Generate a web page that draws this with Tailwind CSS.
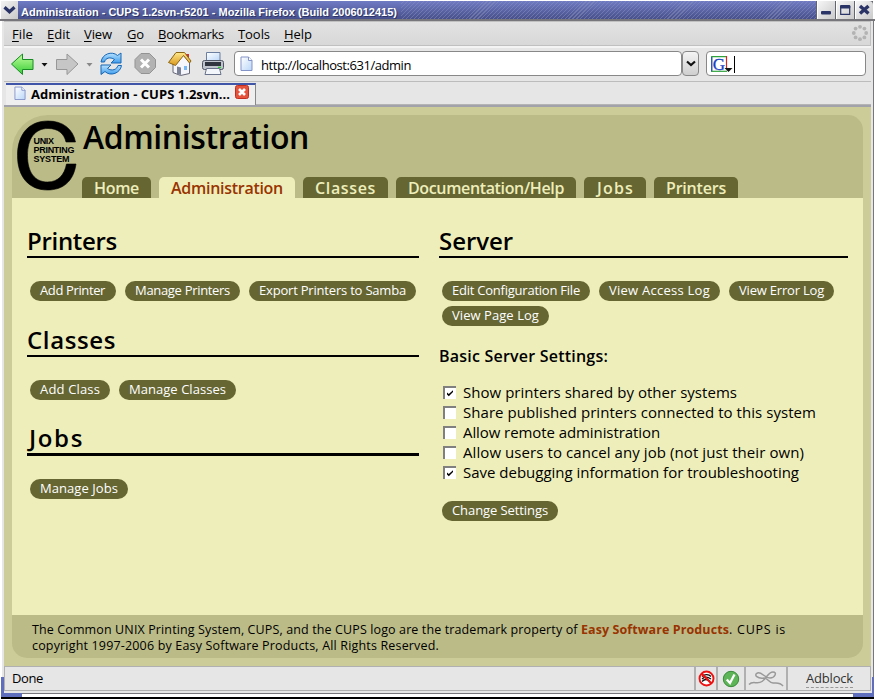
<!DOCTYPE html>
<html lang="en">
<head>
<meta charset="utf-8">
<title>Administration - CUPS 1.2svn-r5201</title>
<script src="https://cdn.jsdelivr.net/npm/@tailwindcss/browser@4"></script>
</head>
<body class="w-[875px] h-[699px] overflow-hidden bg-white font-['Open_Sans','Noto_Sans',sans-serif] text-black">
<div class="relative flex flex-col w-[875px] h-[699px] whitespace-nowrap">

  <!-- Title bar -->
  <header class="flex shrink-0 h-[21px] pt-px pl-px pr-[2px] border-b-2 border-[#77777b]">
    <div class="w-[17px] bg-linear-to-br from-[#f4f4f4] to-[#c8c8c8] flex items-center justify-center">
      <svg width="13" height="10" viewBox="0 0 13 10"><path d="M1.5 2.2 L6.5 6.8 L11.5 2.2" fill="none" stroke="#2b3466" stroke-width="3.2"/></svg>
    </div>
    <div class="flex-1 flex bg-linear-to-b from-[#6f7bc4] to-[#48508c]">
      <span data-w="376" class="pl-[3px] pt-[2px] text-[11px] leading-[18px] font-bold font-['Liberation_Sans',sans-serif] text-white [text-shadow:1px_1px_0_#2b3466]">Administration - CUPS 1.2svn-r5201 - Mozilla Firefox (Build 2006012415)</span>
      <div class="flex-1 ml-[4px] bg-[repeating-linear-gradient(135deg,transparent_0_2px,#8c93b880_2px_2.8px)]"></div>
    </div>
    <div class="flex gap-px pl-px bg-[#62656f]">
      <div class="w-[18px] bg-linear-to-br from-[#f6f6f6] to-[#cacaca] border-l border-white"><svg width="17" height="18"><rect x="3" y="10" width="10" height="3.5" rx="1" fill="#2b3466"/></svg></div>
      <div class="w-[18px] bg-linear-to-br from-[#f6f6f6] to-[#cacaca] border-l border-white"><svg width="17" height="18"><path d="M3.7 5.5h9v7.8h-9z" fill="none" stroke="#2b3466" stroke-width="1.2"/><rect x="3" y="4" width="10.3" height="3.4" rx="1" fill="#2b3466"/></svg></div>
      <div class="w-[18px] bg-linear-to-br from-[#f6f6f6] to-[#cacaca] border-l border-white rounded-tr-sm"><svg width="17" height="18"><path d="M4 5l8.5 7.5M12.500 5L4 12.500" fill="none" stroke="#2b3466" stroke-width="3.4"/></svg></div>
    </div>
  </header>

  <div class="flex flex-col h-[672px] shrink-0 ml-[2px] mr-px pl-[2px] pr-[2px] border-r border-[#77777b] bg-[#e6e6e6]">
    <!-- Menu bar -->
    <nav class="flex shrink-0 h-[25px] pl-[8px] pr-[1px] text-[13px] leading-[24px] bg-linear-to-b from-[#e2e2e2] to-[#d8d8d8] border-y border-[#c0c0c0] border-r">
      <div class="w-[35px]"><span data-w="21"><u class="underline-offset-2">F</u>ile</span></div>
      <div class="w-[37px]"><span data-w="23"><u class="underline-offset-2">E</u>dit</span></div>
      <div class="w-[43px]"><span data-w="28"><u class="underline-offset-2">V</u>iew</span></div>
      <div class="w-[31px]"><span data-w="17"><u class="underline-offset-2">G</u>o</span></div>
      <div class="w-[80px]"><span data-w="66"><u class="underline-offset-2">B</u>ookmarks</span></div>
      <div class="w-[46px]"><span data-w="32"><u class="underline-offset-2">T</u>ools</span></div>
      <div class="flex-1"><span data-w="28"><u class="underline-offset-2">H</u>elp</span></div>
      <svg class="mt-[2px]" width="18" height="18" viewBox="-9 -9 18 18" fill="#b3b3b3"><circle cy="-6.2" r="1.9"/><circle cy="6.2" r="1.9"/><circle cx="-6.2" r="1.9"/><circle cx="6.2" r="1.9"/><circle cx="4.400" cy="4.400" r="1.9"/><circle cx="-4.400" cy="4.400" r="1.900"/><circle cx="4.400" cy="-4.400" r="1.900"/><circle cx="-4.400" cy="-4.400" r="1.900"/></svg>
    </nav>

    <!-- Navigation toolbar -->
    <div class="flex shrink-0 h-[36px] border-t-2 border-t-[#f4f4f4] border-b border-b-[#bcbcbc]">
      <svg class="shrink-0" width="226" height="33" viewBox="4 48 226 33">
        <defs>
          <linearGradient id="g" x2="0" y2="1"><stop stop-color="#c3ff9d"/><stop offset="1" stop-color="#35cc35"/></linearGradient>
          <linearGradient id="b" x2="0" y2="1"><stop stop-color="#b9e2ff"/><stop offset="1" stop-color="#3d9cec"/></linearGradient>
          <linearGradient id="y" x2="0" y2="1"><stop stop-color="#ffe98c"/><stop offset="1" stop-color="#d9971c"/></linearGradient>
          <linearGradient id="p" x2="1" y2="1"><stop stop-color="#fff"/><stop offset="1" stop-color="#b9d6f8"/></linearGradient>
        </defs>
        <path d="M11.500 64L22.500 54V59.500H33V69.500H22.500V74.500Z" fill="url(#g)" stroke="#168c23" stroke-linejoin="round"/>
        <path d="M41.500 63h6l-3 3.500z" fill="#111"/>
        <path d="M78 64L67 54V59.500H56.500V69.500H67V74.500Z" fill="#c6c6c6" stroke="#979797" stroke-linejoin="round"/>
        <path d="M86.500 63h6l-3 3.500z" fill="#888"/>
        <path d="M101 62C102 54 112 50.500 117.500 55.500L121 53V63H111L114.500 59.500C110 56.500 105.500 58 104.500 62Z" fill="url(#b)" stroke="#1767b5"/>
        <path d="M121.500 65.500C120.500 73 110.500 77 105 71.500L101 74.500V65H111L107.500 68.500C112 71.500 117 69.500 118 65.500Z" fill="url(#b)" stroke="#1767b5"/>
        <path d="M141 53.500h8.500l6 6v8l-6 6H141l-6-6v-8z" fill="#b2b2b2" stroke="#939393"/>
        <path d="M141 59.500l8 8M149 59.500l-8 8" stroke="#fff" stroke-width="3"/>
        <path d="M173 62.500L183 55l6.500 7v11.500l-9 2L173 72.500z" fill="#f4f6fb" stroke="#667"/>
        <path d="M177 66.500l4 1v7.500l-4-1z" fill="#7a8194"/><path d="M184 66h3v4h-3z" fill="#78b8f4"/>
        <path d="M186 54h3v6l-3-3z" fill="#c33"/>
        <path d="M168.500 62.500L176 52.500H184.500L191 61l-1.500 2-6-7.500-8 10z" fill="url(#y)" stroke="#8b6414"/>
        <path d="M206.500 61V52.500h13.500V61z" fill="url(#p)" stroke="#6c7ea0"/>
        <rect x="202.500" y="60.500" width="21" height="9" rx="2" fill="#bfc3cc" stroke="#4d5464"/>
        <rect x="205" y="62" width="16" height="4" fill="#30343e"/><path d="M218 67.500h3" stroke="#3c3" stroke-width="1.500"/>
        <path d="M206.500 68.500h13l1.500 6h-16z" fill="#f3f6fb" stroke="#68728a"/>
      </svg>
      <div class="flex items-center mt-[3px] ml-[4px] w-[448px] h-[25px] bg-white border border-[#888] rounded-[4px] text-[13px]">
        <svg class="ml-[5px] mt-px" width="13" height="16" viewBox="0 0 13 16"><path d="M1 1h7.500l3.500 3.500V14.500H1z" fill="url(#p)" stroke="#8493c8"/><path d="M8.500 1v3.500H12" fill="#fff" stroke="#8493c8"/></svg>
        <span class="ml-[8px] mt-[4px]" data-w="150">http://localhost:631/admin</span>
      </div>
      <div class="flex items-center justify-center mt-[3px] w-[17px] h-[25px] bg-linear-to-b from-[#f4f4f4] to-[#cfcfcf] border border-[#888] rounded-[4px]">
        <svg width="10" height="7"><path d="M1 1.500l4 3.500 4-3.500" fill="none" stroke="#111" stroke-width="2.200"/></svg>
      </div>
      <div class="flex items-center mt-[3px] ml-[7px] w-[160px] h-[25px] bg-white border border-[#888] rounded-[4px]">
        <svg class="ml-[4px]" width="25" height="20" viewBox="0 0 25 20"><path d="M.7 18V2.700H15" fill="none" stroke="#2fa33a" stroke-width="1.200"/><path d="M.7 3v14.300" stroke="#2a50c8" stroke-width="1.200"/><path d="M1 17.300h15" stroke="#2fa33a" stroke-width="1.200"/><path d="M15.500 2v12" stroke="#d22" stroke-width="1.200"/><text x="1.800" y="15.700" font-family="Liberation Serif" font-size="17" fill="#1b3fc4" stroke="#1b3fc4" stroke-width=".3">G</text><path d="M13.500 14h8l-4 4z" fill="#111"/><path d="M23.500 2v17" stroke="#000"/></svg>
      </div>
    </div>

    <!-- Browser tabs -->
    <div class="flex shrink-0 h-[25px] pt-px pl-[2px] border-b-2 border-[#a2a2aa]">
      <div class="flex items-start w-[250px] h-[22px] pl-[8px] border-t-2 border-t-[#4155a8] border-r border-r-[#888] bg-[#efefef]">
        <svg class="mt-px" width="12" height="15" viewBox="0 0 13 16"><path d="M1 1h7.500l3.500 3.500V14.500H1z" fill="url(#p)" stroke="#8493c8"/><path d="M8.500 1v3.500H12" fill="#fff" stroke="#8493c8"/></svg>
        <span class="ml-[5px] text-[13px] leading-[18px] font-bold" data-w="199">Administration - CUPS 1.2svn...</span>
        <svg class="ml-[5px]" width="14" height="14"><rect x=".5" y=".5" width="13" height="13" rx="2" fill="#e5533d" stroke="#c22e20"/><path d="M4 4l6 6M10 4l-6 6" stroke="#fff" stroke-width="2.600"/></svg>
      </div>
      <div class="flex-1 h-[22px] border-b border-[#b4b4b4]"></div>
    </div>

    <!-- CUPS page -->
    <main class="flex flex-col shrink-0 h-[559px] px-[8px] py-[8px] bg-[#cccc99]">
      <div class="flex shrink-0 h-[83px] bg-[#bbbb88] rounded-tl-[36px] rounded-tr-[15px]">
        <svg class="shrink-0" width="70" height="83" viewBox="12 115 70 83">
          <path d="M75.500 142C73 129 63 121 48 121C29 121 17.500 134 17.500 155.500C17.500 177 29 190 47.500 190C63 190 73.500 181.500 76 164H66.500C64.500 174.500 58.500 182 47.500 182C34.500 182 27.500 172 27.500 155.500C27.500 139 34.500 128.500 48 128.500C58 128.500 64 133.500 66 142Z" fill="#000" stroke="#000" stroke-width=".6"/>
          <g font-family="Liberation Sans" font-weight="700" font-size="9"><text x="33.500" y="144" textLength="20.500">UNIX</text><text x="33.500" y="152.800" textLength="41">PRINTING</text><text x="33.500" y="161.600" textLength="36">SYSTEM</text></g>
        </svg>
        <div class="flex flex-col justify-between">
          <h1 class="pl-px leading-[43px] text-[32px] font-semibold"><span data-w="226">Administration</span></h1>
          <div class="flex gap-[8px] text-[16px] leading-[22px] font-semibold text-[#eeeebb]">
            <a class="h-[21px] w-[69px] pl-[12px] rounded-t-[5px] bg-[#666633]"><span data-w="45">Home</span></a>
            <a class="h-[21px] w-[136px] pl-[12px] rounded-t-[5px] bg-[#eeeebb] text-[#993300]"><span data-w="112">Administration</span></a>
            <a class="h-[21px] w-[85px] pl-[12px] rounded-t-[5px] bg-[#666633]"><span data-w="61">Classes</span></a>
            <a class="h-[21px] w-[180px] pl-[12px] rounded-t-[5px] bg-[#666633]"><span data-w="156">Documentation/Help</span></a>
            <a class="h-[21px] w-[62px] pl-[13px] rounded-t-[5px] bg-[#666633]"><span data-w="37">Jobs</span></a>
            <a class="h-[21px] w-[84px] pl-[12px] rounded-t-[5px] bg-[#666633]"><span data-w="60">Printers</span></a>
          </div>
        </div>
      </div>

      <div class="flex shrink-0 gap-[20px] h-[417px] px-[15px] pt-[26px] bg-[#eeeebb] text-[13px] leading-[19px]">
        <section class="w-[392px]">
          <h2 class="h-[34px] border-b-2 border-black text-[24px] leading-[33px] font-semibold"><span data-w="90">Printers</span></h2>
          <div class="flex gap-[9px] pt-[23px] pl-[3px] h-[65px] text-white">
            <a class="h-[20px] w-[86px] pl-[10px] rounded-full bg-[#666633]"><span data-w="65">Add Printer</span></a>
            <a class="h-[20px] w-[115px] pl-[10px] rounded-full bg-[#666633]"><span data-w="95">Manage Printers</span></a>
            <a class="h-[20px] w-[167px] pl-[10px] rounded-full bg-[#666633]"><span data-w="147">Export Printers to Samba</span></a>
          </div>
          <h2 class="h-[34px] border-b-2 border-black text-[24px] leading-[33px] font-semibold"><span data-w="89">Classes</span></h2>
          <div class="flex gap-[9px] pt-[23px] pl-[3px] h-[64px] text-white">
            <a class="h-[20px] w-[80px] pl-[10px] rounded-full bg-[#666633]"><span data-w="60">Add Class</span></a>
            <a class="h-[20px] w-[117px] pl-[10px] rounded-full bg-[#666633]"><span data-w="97">Manage Classes</span></a>
          </div>
          <h2 class="h-[35px] border-b-3 border-black pl-[2px] text-[24px] leading-[33px] font-semibold"><span data-w="55">Jobs</span></h2>
          <div class="flex gap-[9px] pt-[23px] pl-[3px] text-white">
            <a class="h-[20px] w-[98px] pl-[10px] rounded-full bg-[#666633]"><span data-w="78">Manage Jobs</span></a>
          </div>
        </section>

        <section class="w-[409px]">
          <h2 class="h-[34px] border-b-2 border-black text-[24px] leading-[33px] font-semibold"><span data-w="74">Server</span></h2>
          <div class="flex flex-wrap gap-x-[9px] gap-y-[5px] pt-[23px] pl-[3px] text-white">
            <a class="h-[20px] w-[148px] pl-[10px] rounded-full bg-[#666633]"><span data-w="128">Edit Configuration File</span></a>
            <a class="h-[20px] w-[121px] pl-[10px] rounded-full bg-[#666633]"><span data-w="101">View Access Log</span></a>
            <a class="h-[20px] w-[105px] pl-[10px] rounded-full bg-[#666633]"><span data-w="85">View Error Log</span></a>
            <a class="h-[20px] w-[107px] pl-[10px] rounded-full bg-[#666633]"><span data-w="87">View Page Log</span></a>
          </div>
          <h3 class="mt-[20px] text-[16px] leading-[20px] font-semibold"><span data-w="169">Basic Server Settings:</span></h3>
          <div class="flex flex-col mt-[16px] pl-[4px] text-[15px] leading-[20px]">
            <label class="flex items-center gap-[7px]"><i class="w-[13px] h-[13px] shrink-0 border-t-2 border-l-2 border-[#808080] bg-white"><svg width="11" height="11"><path d="M2 4.500v2l1.800 1.800L8 4V2.300L3.800 6z"/></svg></i><span data-w="274">Show printers shared by other systems</span></label>
            <label class="flex items-center gap-[7px]"><i class="w-[13px] h-[13px] shrink-0 border-t-2 border-l-2 border-[#808080] bg-white"></i><span data-w="353">Share published printers connected to this system</span></label>
            <label class="flex items-center gap-[7px]"><i class="w-[13px] h-[13px] shrink-0 border-t-2 border-l-2 border-[#808080] bg-white"></i><span data-w="197">Allow remote administration</span></label>
            <label class="flex items-center gap-[7px]"><i class="w-[13px] h-[13px] shrink-0 border-t-2 border-l-2 border-[#808080] bg-white"></i><span data-w="341">Allow users to cancel any job (not just their own)</span></label>
            <label class="flex items-center gap-[7px]"><i class="w-[13px] h-[13px] shrink-0 border-t-2 border-l-2 border-[#808080] bg-white"><svg width="11" height="11"><path d="M2 4.500v2l1.800 1.800L8 4V2.300L3.800 6z"/></svg></i><span data-w="336">Save debugging information for troubleshooting</span></label>
          </div>
          <div class="flex mt-[19px] pl-[3px] text-white">
            <a class="h-[20px] w-[116px] pl-[10px] rounded-full bg-[#666633]"><span data-w="96">Change Settings</span></a>
          </div>
        </section>
      </div>

      <footer class="shrink-0 h-[43px] pl-[20px] pt-[7px] text-[12.5px] leading-[16px] bg-[#bbbb88] rounded-b-[15px]">
        <p><span data-w="549">The Common UNIX Printing System, CUPS, and the CUPS logo are the trademark property of </span><b class="font-bold text-[#993300]" data-w="148">Easy Software Products</b><span data-w="57">. CUPS is</span></p>
        <p><span data-w="407">copyright 1997-2006 by Easy Software Products, All Rights Reserved.</span></p>
      </footer>
    </main>

    <!-- Status bar -->
    <div class="flex shrink-0 h-[25px] text-[13px] leading-[23px] border border-[#b0b0b0]">
      <div class="flex-1 pl-[7px]"><span data-w="31">Done</span></div>
      <div class="w-[22px] border-l-2 border-[#b0b0b0] flex items-center justify-center"><svg width="17" height="17"><circle cx="8.500" cy="8.500" r="7" fill="#fff"/><path d="M4 6.500c3-3 7-2 9 0M4 9c3-3 6-2 9 0M4 11.500c3-3 6-2 8 0" fill="none" stroke="#111" stroke-width="1.300"/><circle cx="8.500" cy="8.500" r="7" fill="none" stroke="#e11" stroke-width="1.900"/><path d="M3.500 3.500l10 10" stroke="#e11" stroke-width="2.200"/></svg></div>
      <div class="w-[28px] border-l-2 border-[#b0b0b0] flex items-center justify-center"><svg width="18" height="18"><circle cx="9" cy="9" r="7.700" fill="#5db558" stroke="#3c8a3a"/><path d="M4.800 9.500L8 13l4.500-8.500" fill="none" stroke="#fff" stroke-width="2.300"/></svg></div>
      <div class="w-[42px] border-l-2 border-[#b0b0b0] flex items-center justify-center"><svg width="36" height="18" fill="none" stroke="#999" stroke-width="1.500"><path d="M1 14.500C5 10 9 15 14 11.500C19 8 20 2 25 2c4.500 0 2 6-3 6C16 8 14 1.500 9.500 3C5 5 10 9 16 8c4 0 5 5 9 5s7-1 10 3"/></svg></div>
      <div class="w-[84px] border-l-2 border-[#b0b0b0] pl-[18px]"><span class="inline-block leading-[17px] mt-[3px] border-b border-dashed border-[#999] text-[#333]" data-w="47">Adblock</span></div>
    </div>
    <div class="grow"></div>
  </div>

  <!-- Bottom window frame -->
  <div class="shrink-0 flex h-[6px] ml-px mr-px bg-black pb-[2px]">
    <div class="w-[21px] h-[4px] bg-[#5f6dbd]"></div>
    <div class="flex-1 border-t border-[#77777b] bg-white"></div>
    <div class="w-[21px] h-[4px] bg-[#5f6dbd]"></div>
  </div>
  <div class="absolute left-px top-[677px] w-[3px] h-[20px] bg-[#5f6dbd] rounded-bl"></div>
  <div class="absolute right-[1px] top-[677px] w-[2px] h-[20px] bg-[#5f6dbd] rounded-br"></div>
</div>
<script>
// Track each run of text so that it fills its nominal width.
function fit() {
  document.querySelectorAll('[data-w]').forEach(e => {
    e.style.letterSpacing = '0px';
    const r = document.createRange();
    r.selectNodeContents(e);
    e.style.letterSpacing = (e.dataset.w - r.getBoundingClientRect().width) / e.textContent.length + 'px';
  });
}
window.addEventListener('load', () => { fit(); document.fonts.ready.then(fit); setTimeout(fit, 50); });
</script>
</body>
</html>
